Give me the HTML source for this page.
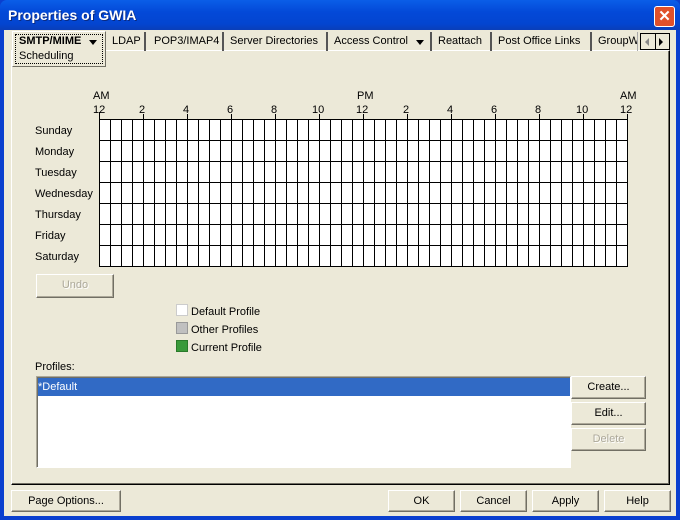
<!DOCTYPE html>
<html><head><style>
*{margin:0;padding:0;box-sizing:border-box}
body{width:680px;height:520px;overflow:hidden;background:#0a3fcf;font-family:"Liberation Sans",sans-serif;font-size:11px;color:#000;position:relative}
.a{position:absolute}
.win{left:4px;top:30px;width:672px;height:486px;background:#ece9d8}
.title{left:0;top:0;width:680px;height:30px;background:linear-gradient(#0a5ee8,#0349d8 40%,#0345d0 80%,#0a3fb8);border-radius:7px 7px 0 0}
.btn{position:absolute;background:#ece9d8;border:1px solid;border-color:#fff #716f64 #716f64 #fff;box-shadow:inset -1px -1px 0 #aca899;text-align:center;line-height:20px;font-size:11px}
.tab{position:absolute;top:32px;height:19px;border-right:2px solid #555;line-height:18px;padding-left:6px;font-size:11px;white-space:nowrap}
.lg{position:absolute;width:12px;height:12px}
</style></head><body>
<div class="a title"></div>
<div class="a" style="left:8px;top:7px;color:#fff;font-weight:bold;font-size:14px;text-shadow:1px 1px #0a2a80">Properties of GWIA</div>
<div class="a" style="left:654px;top:6px;width:21px;height:21px;background:#e0502a;border:1px solid #fff;border-radius:3px;color:#fff;font-weight:bold;font-size:15px;text-align:center;line-height:19px">✕</div>
<div class="a win"></div>
<div class="a" style="left:11px;top:50px;width:659px;height:435px;border:1px solid;border-color:#fff #000 #000 #fff;box-shadow:inset -1px -1px 0 #716f64"></div>
<div class="a" style="left:12px;top:31px;width:94px;height:36px;background:#ece9d8;border:1px solid;border-color:#fff #716f64 #716f64 #fff"></div>
<div class="a" style="left:15px;top:34px;width:88px;height:30px;border:1px dotted #000"></div>
<div class="a" style="left:19px;top:35px;font-weight:bold">SMTP/MIME</div>
<div class="a" style="left:89px;top:40px;width:0;height:0;border:4px solid transparent;border-top:5px solid #000"></div>
<div class="a" style="left:19px;top:50px">Scheduling</div>
<div class="tab" style="left:106px;width:40px">LDAP</div>
<div class="tab" style="left:148px;width:76px">POP3/IMAP4</div>
<div class="tab" style="left:224px;width:104px">Server Directories</div>
<div class="tab" style="left:328px;width:104px">Access Control</div>
<div class="a" style="left:416px;top:40px;width:0;height:0;border:4px solid transparent;border-top:5px solid #000"></div>
<div class="tab" style="left:432px;width:60px">Reattach</div>
<div class="tab" style="left:492px;width:100px">Post Office Links</div>
<div class="tab" style="left:592px;width:46px;border-right:1px solid #aaa;overflow:hidden">GroupW</div>
<div class="a" style="left:640px;top:33px;width:30px;height:17px;border:1px solid #000;background:#ece9d8"></div>
<div class="a" style="left:655px;top:33px;width:1px;height:17px;background:#000"></div>
<div class="a" style="left:645px;top:38px;border:4px solid transparent;border-right:4px solid #888;border-left:0"></div>
<div class="a" style="left:659px;top:38px;border:4px solid transparent;border-left:4px solid #000;border-right:0"></div>
<div class="a" style="left:93px;top:90px">AM</div>
<div class="a" style="left:357px;top:90px">PM</div>
<div class="a" style="left:620px;top:90px">AM</div>
<div class="a" style="left:93px;top:104px;width:540px;height:14px">
<span class="a" style="left:0">12</span><span class="a" style="left:46px">2</span><span class="a" style="left:90px">4</span><span class="a" style="left:134px">6</span><span class="a" style="left:178px">8</span><span class="a" style="left:219px">10</span><span class="a" style="left:263px">12</span><span class="a" style="left:310px">2</span><span class="a" style="left:354px">4</span><span class="a" style="left:398px">6</span><span class="a" style="left:442px">8</span><span class="a" style="left:483px">10</span><span class="a" style="left:527px">12</span></div>
<svg class="a" style="left:98px;top:112px" width="532" height="158" shape-rendering="crispEdges">
<rect x="1" y="7" width="528" height="148" fill="#fff"/>
<path stroke="#000" stroke-width="1" fill="none" d="M1.5 7V155M12.5 7V155M23.5 7V155M34.5 7V155M45.5 7V155M56.5 7V155M67.5 7V155M78.5 7V155M89.5 7V155M100.5 7V155M111.5 7V155M122.5 7V155M133.5 7V155M144.5 7V155M155.5 7V155M166.5 7V155M177.5 7V155M188.5 7V155M199.5 7V155M210.5 7V155M221.5 7V155M232.5 7V155M243.5 7V155M254.5 7V155M265.5 7V155M276.5 7V155M287.5 7V155M298.5 7V155M309.5 7V155M320.5 7V155M331.5 7V155M342.5 7V155M353.5 7V155M364.5 7V155M375.5 7V155M386.5 7V155M397.5 7V155M408.5 7V155M419.5 7V155M430.5 7V155M441.5 7V155M452.5 7V155M463.5 7V155M474.5 7V155M485.5 7V155M496.5 7V155M507.5 7V155M518.5 7V155M529.5 7V155M1 7.5H530M1 28.5H530M1 49.5H530M1 70.5H530M1 91.5H530M1 112.5H530M1 133.5H530M1 154.5H530"/>
<path d="M1.5 0V7M45.5 2V7M89.5 2V7M133.5 2V7M177.5 2V7M221.5 2V7M265.5 2V7M309.5 2V7M353.5 2V7M397.5 2V7M441.5 2V7M485.5 2V7M529.5 2V7" stroke="#000"/>
</svg>
<div class="a" style="left:35px;top:121px;line-height:21px">Sunday<br>Monday<br>Tuesday<br>Wednesday<br>Thursday<br>Friday<br>Saturday</div>
<div class="btn" style="left:36px;top:274px;width:78px;height:24px;color:#aca899;text-shadow:1px 1px #fff">Undo</div>
<div class="lg" style="left:176px;top:304px;background:#fff;border:1px solid #ccc"></div>
<div class="lg" style="left:176px;top:322px;background:#c0c0c0;border:1px solid #999"></div>
<div class="lg" style="left:176px;top:340px;background:#3a9a3a;border:1px solid #2a7a2a"></div>
<div class="a" style="left:191px;top:303px;line-height:18px">Default Profile<br>Other Profiles<br>Current Profile</div>
<div class="a" style="left:35px;top:361px">Profiles:</div>
<div class="a" style="left:36px;top:376px;width:535px;height:92px;background:#fff;border:1px solid;border-color:#aca899 #fff #fff #aca899;box-shadow:inset 1px 1px 0 #716f64"></div>
<div class="a" style="left:38px;top:378px;width:532px;height:18px;background:#316ac5;color:#fff;line-height:18px">*Default</div>
<div class="btn" style="left:571px;top:376px;width:75px;height:23px">Create...</div>
<div class="btn" style="left:571px;top:402px;width:75px;height:23px">Edit...</div>
<div class="btn" style="left:571px;top:428px;width:75px;height:23px;color:#aca899;text-shadow:1px 1px #fff">Delete</div>
<div class="btn" style="left:11px;top:490px;width:110px;height:22px">Page Options...</div>
<div class="btn" style="left:388px;top:490px;width:67px;height:22px">OK</div>
<div class="btn" style="left:460px;top:490px;width:67px;height:22px">Cancel</div>
<div class="btn" style="left:532px;top:490px;width:67px;height:22px">Apply</div>
<div class="btn" style="left:604px;top:490px;width:67px;height:22px">Help</div>
</body></html>
